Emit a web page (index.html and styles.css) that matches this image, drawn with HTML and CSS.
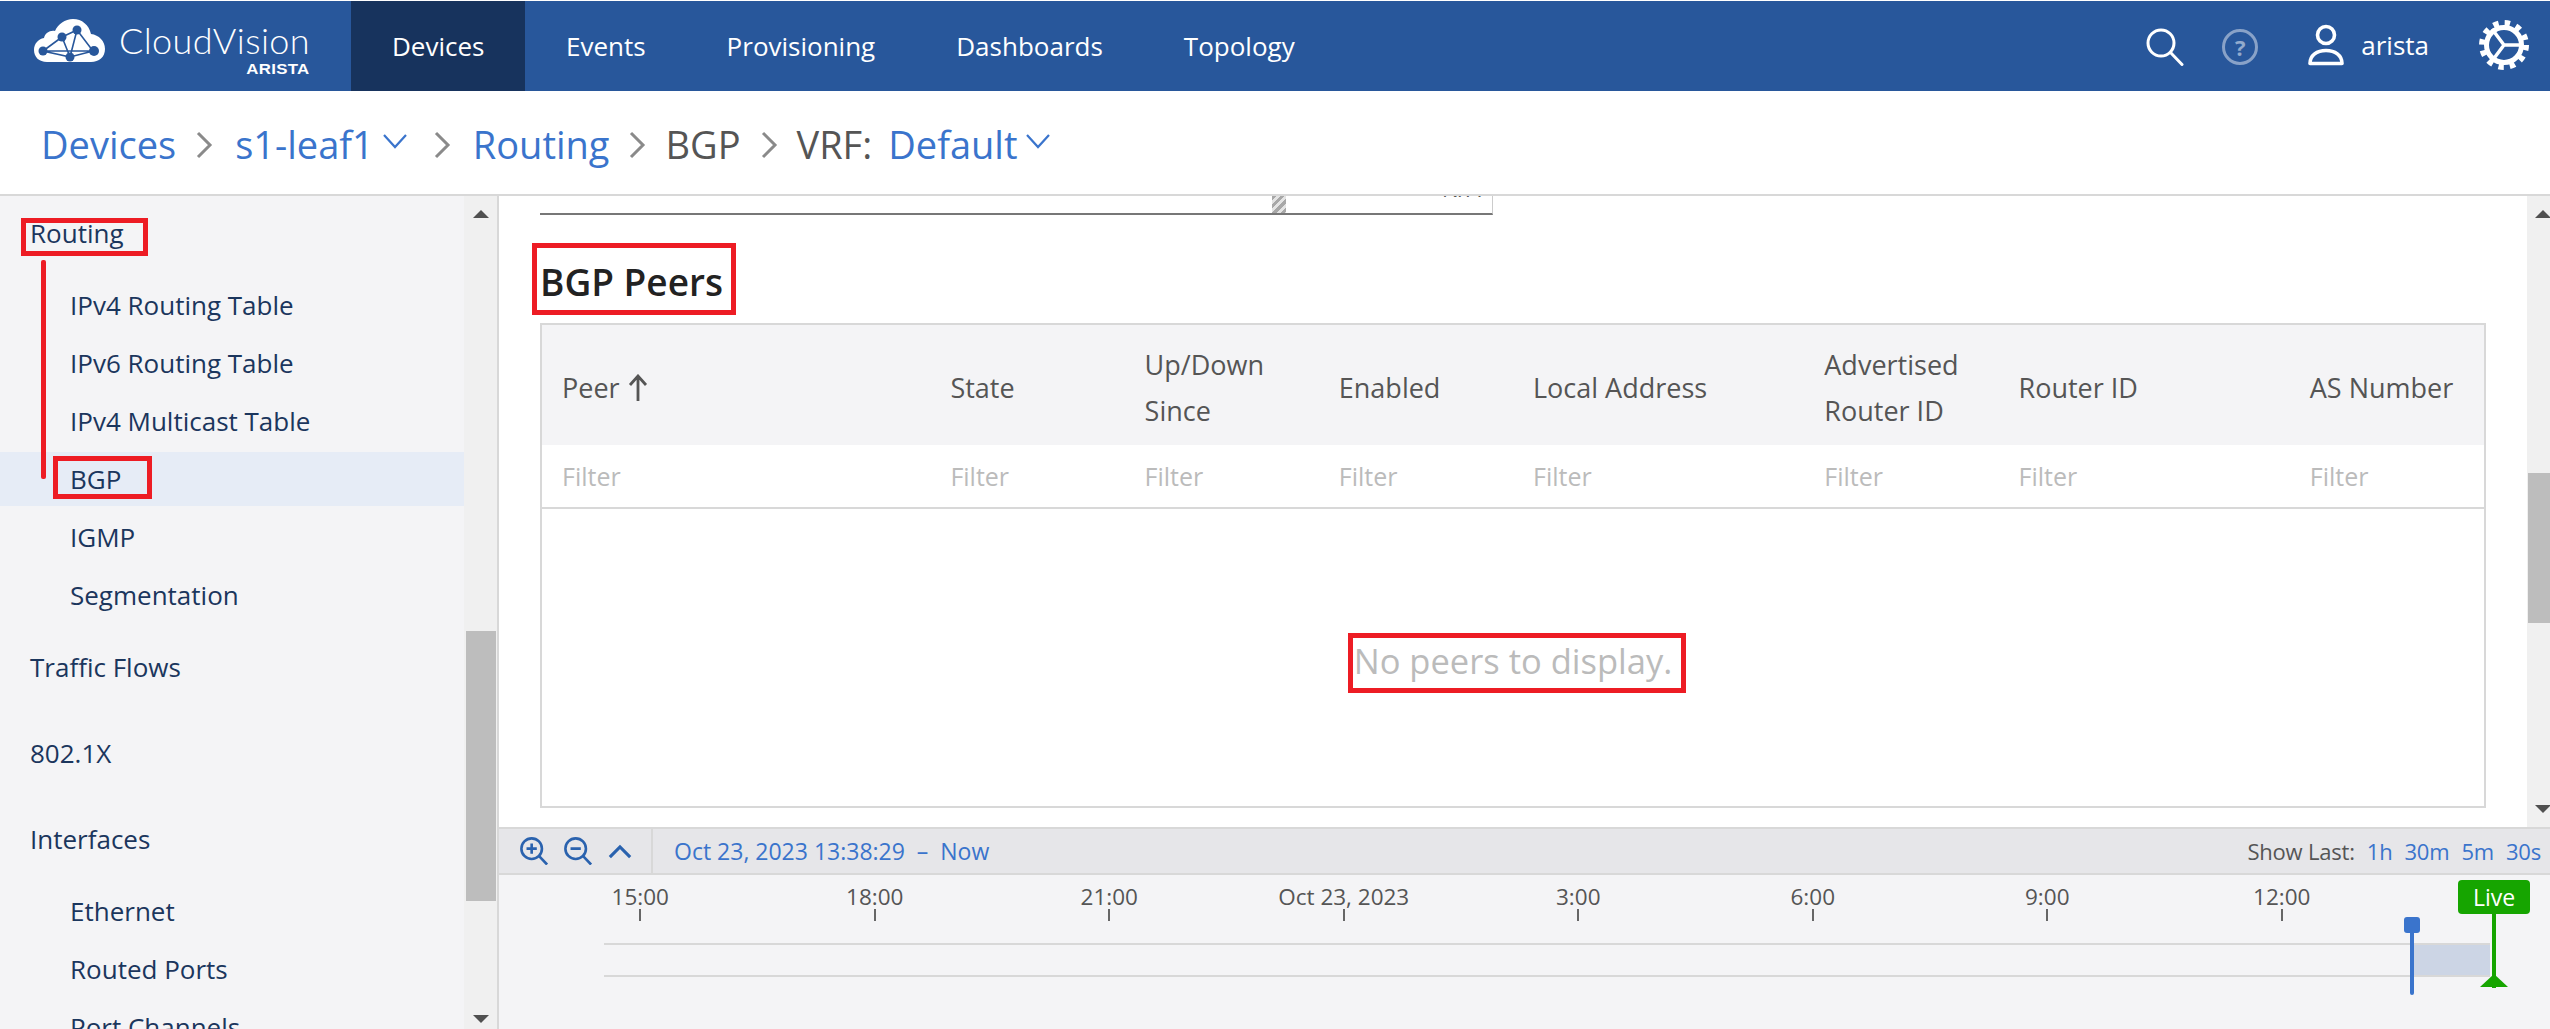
FILE: index.html
```html
<!DOCTYPE html>
<html lang="en">
<head>
    <meta charset="UTF-8">
    <title>CloudVision - BGP</title>
    <link rel="stylesheet" href="styles.css">
</head>
<body>
    <nav class="topnav">
        <div class="logo">
            <svg class="logo-cloud" width="72" height="44" viewBox="0 0 72 44">
                <path fill="#fff" d="M13 43C5 43 0 38 0 31c0-6 4-11 10-12 1-5 6-8 11-7C24 5 31 0 39 0c9 0 16 6 18 15 8 1 14 7 14 15 0 8-6 13-14 13z"/>
                <g stroke="#28579b" stroke-width="1.6" fill="none">
                    <path d="M9 32L28 18 43 11 59 32 36 38zM9 32L36 38 43 11M28 18L36 38M9 32L59 32"/>
                </g>
                <g fill="#28579b">
                    <circle cx="9" cy="32" r="4.5"/><circle cx="28" cy="18" r="4.5"/><circle cx="43" cy="11" r="4.5"/>
                    <circle cx="36" cy="38" r="4.5"/><circle cx="60" cy="32" r="5"/>
                </g>
            </svg>
            <div class="logo-words">
                <span class="logo-name">CloudVision</span>
                <span class="logo-brand">ARISTA</span>
            </div>
        </div>
        <a class="tab active">Devices</a>
        <a class="tab">Events</a>
        <a class="tab">Provisioning</a>
        <a class="tab">Dashboards</a>
        <a class="tab">Topology</a>
        <div class="nav-right">
            <svg class="icon-search" width="38" height="38" viewBox="0 0 38 38">
                <circle cx="15" cy="15" r="13" fill="none" stroke="#fff" stroke-width="3"/>
                <path d="M24.500 24.500L36 36.500" stroke="#fff" stroke-width="3" stroke-linecap="round"/>
            </svg>
            <div class="help">?</div>
            <svg class="icon-user" width="36" height="42" viewBox="0 0 36 42">
                <circle cx="18" cy="11" r="8.500" fill="none" stroke="#fff" stroke-width="3.600"/>
                <path d="M2 39.500C2 31 9 26.500 18 26.500S34 31 34 39.500z" fill="none" stroke="#fff" stroke-width="3.600" stroke-linejoin="round"/>
            </svg>
            <span class="username">arista</span>
            <svg class="icon-gear" width="50" height="50" viewBox="0 0 50 50">
                <circle cx="25" cy="25" r="17.500" fill="none" stroke="#fff" stroke-width="5"/>
                <circle cx="25" cy="25" r="21.500" fill="none" stroke="#fff" stroke-width="7" stroke-dasharray="5.260 6"/>
                <path d="M25 25H43M25 25L13 9M25 25L13 41" stroke="#fff" stroke-width="3.500" fill="none"/>
            </svg>
        </div>
    </nav>

    <header class="crumbs">
        <a class="crumb-link">Devices</a>
        <svg class="sep" width="17" height="28" viewBox="0 0 17 28"><path d="M2 2l12 12L2 26" fill="none" stroke="#8a8a8a" stroke-width="3"/></svg>
        <a class="crumb-link">s1-leaf1</a>
        <svg class="caret" width="26" height="16" viewBox="0 0 26 16"><path d="M2 2l11 12L24 2" fill="none" stroke="#3a74cc" stroke-width="2.200"/></svg>
        <svg class="sep" width="17" height="28" viewBox="0 0 17 28"><path d="M2 2l12 12L2 26" fill="none" stroke="#8a8a8a" stroke-width="3"/></svg>
        <a class="crumb-link">Routing</a>
        <svg class="sep sep-tight" width="17" height="28" viewBox="0 0 17 28"><path d="M2 2l12 12L2 26" fill="none" stroke="#8a8a8a" stroke-width="3"/></svg>
        <span class="crumb-text">BGP</span>
        <svg class="sep sep-tight" width="17" height="28" viewBox="0 0 17 28"><path d="M2 2l12 12L2 26" fill="none" stroke="#8a8a8a" stroke-width="3"/></svg>
        <span class="crumb-text">VRF:</span>
        <a class="crumb-link crumb-vrf">Default</a>
        <svg class="caret" width="26" height="16" viewBox="0 0 26 16"><path d="M2 2l11 12L24 2" fill="none" stroke="#3a74cc" stroke-width="2.200"/></svg>
    </header>

    <div class="workspace">
        <aside class="sidebar">
            <div class="side-list">
                <div class="side-head">Routing</div>
                <ul class="side-sub">
                    <li>IPv4 Routing Table</li>
                    <li>IPv6 Routing Table</li>
                    <li>IPv4 Multicast Table</li>
                    <li class="current">BGP</li>
                    <li>IGMP</li>
                    <li>Segmentation</li>
                </ul>
                <div class="side-head">Traffic Flows</div>
                <div class="side-head">802.1X</div>
                <div class="side-head">Interfaces</div>
                <ul class="side-sub">
                    <li>Ethernet</li>
                    <li>Routed Ports</li>
                    <li>Port Channels</li>
                </ul>
            </div>
            <div class="scrollbar side-scroll">
                <div class="arrow-up"></div>
                <div class="thumb"></div>
                <div class="arrow-down"></div>
            </div>
        </aside>

        <div class="main">
            <div class="content-wrap">
                <section class="content">
                    <div class="prev-table">
                        <div class="hatch"></div>
                        <span class="prev-value">N/A</span>
                    </div>
                    <h2 class="section-title">BGP Peers</h2>
                    <div class="peers">
                        <div class="peers-row peers-head">
                            <div>Peer <svg class="sort" width="20" height="28" viewBox="0 0 20 28"><path d="M10 27V2M2 11l8-9 8 9" fill="none" stroke="#555" stroke-width="2.800"/></svg></div>
                            <div>State</div>
                            <div>Up/Down<br>Since</div>
                            <div>Enabled</div>
                            <div>Local Address</div>
                            <div>Advertised<br>Router ID</div>
                            <div>Router ID</div>
                            <div>AS Number</div>
                        </div>
                        <div class="peers-row peers-filter">
                            <div>Filter</div><div>Filter</div><div>Filter</div><div>Filter</div>
                            <div>Filter</div><div>Filter</div><div>Filter</div><div>Filter</div>
                        </div>
                        <div class="peers-empty">No peers to display.</div>
                    </div>
                </section>
                <div class="scrollbar content-scroll">
                    <div class="arrow-up"></div>
                    <div class="thumb"></div>
                    <div class="arrow-down"></div>
                </div>
            </div>

            <div class="timeline">
                <div class="time-bar">
                    <div class="zoom-tools">
                        <svg width="28" height="28" viewBox="0 0 30 30"><circle cx="12.500" cy="12.500" r="11" fill="none" stroke="#2a62ae" stroke-width="2.800"/><path d="M20.500 20.500L29 29.500M7 12.500h11M12.500 7v11" fill="none" stroke="#2a62ae" stroke-width="2.800"/></svg>
                        <svg width="28" height="28" viewBox="0 0 30 30"><circle cx="12.500" cy="12.500" r="11" fill="none" stroke="#2a62ae" stroke-width="2.800"/><path d="M20.500 20.500L29 29.500M7 12.500h11" fill="none" stroke="#2a62ae" stroke-width="2.800"/></svg>
                        <svg width="24" height="15" viewBox="0 0 26 16"><path d="M2 14L13 3l11 11" fill="none" stroke="#2a62ae" stroke-width="3.400"/></svg>
                    </div>
                    <span class="range">Oct 23, 2023 13:38:29&nbsp; –&nbsp; Now</span>
                    <div class="show-last">
                        <span class="show-label">Show Last:</span>
                        <a>1h</a><a>30m</a><a>5m</a><a>30s</a>
                    </div>
                </div>
                <div class="chart">
                    <div class="ticks">
                        <div class="tick">15:00</div>
                        <div class="tick">18:00</div>
                        <div class="tick">21:00</div>
                        <div class="tick">Oct 23, 2023</div>
                        <div class="tick">3:00</div>
                        <div class="tick">6:00</div>
                        <div class="tick">9:00</div>
                        <div class="tick">12:00</div>
                    </div>
                    <div class="track"><div class="selection"></div></div>
                    <div class="handle"></div>
                    <div class="live">
                        <span class="live-badge">Live</span>
                        <span class="live-stem"></span>
                        <span class="live-foot"></span>
                    </div>
                </div>
            </div>
        </div>
    </div>

    <!-- red annotations drawn over the screenshot -->
    <div class="mark mark-routing"></div>
    <div class="mark-line"></div>
    <div class="mark mark-bgp"></div>
    <div class="mark mark-title"></div>
    <div class="mark mark-empty"></div>
</body>
</html>
```

FILE: styles.css
```css
* { box-sizing: border-box; }
html, body { margin: 0; padding: 0; }
body {
    width: 2550px;
    height: 1029px;
    padding-top: 1px;
    overflow: hidden;
    display: flex;
    flex-direction: column;
    position: relative;
    background: #fff;
    font-family: "Open Sans", "Noto Sans", sans-serif;
    font-size: 26px;
    color: #555;
}

/* top nav */
.topnav { display: flex; height: 90px; flex: none; background: #28579b; color: #fff; }
.logo { width: 351px; display: flex; padding: 18px 0 0 34px; flex: none; }
.logo-words { display: flex; flex-direction: column; align-items: flex-end; width: 190px; margin-left: 14px; }
.logo-name { font-family: Lato, sans-serif; font-weight: 300; font-size: 36px; line-height: 38px; letter-spacing: 0.4px; white-space: nowrap; margin-top: 2px; }
.logo-brand { font-family: "Liberation Sans", sans-serif; font-weight: 700; font-size: 15px; line-height: 14px; letter-spacing: 0.3px; margin-top: 3px; transform: scaleX(1.12); transform-origin: right; }
.tab { display: flex; align-items: center; padding: 0 40.500px; }
.tab.active { background: #17335d; padding: 0 41px; }
.nav-right { margin-left: auto; display: flex; align-items: center; padding-right: 21px; }
.icon-search { margin-right: 38px; margin-top: 1px; }
.help {
    width: 36px; height: 36px; margin-right: 50px; margin-top: 2px;
    border: 3px solid rgba(255, 255, 255, 0.45); border-radius: 50%;
    color: rgba(255, 255, 255, 0.5);
    display: flex; align-items: center; justify-content: center;
    font-size: 22px; font-weight: 700;
}
.icon-user { margin-right: 17px; margin-top: -3px; }
.username { margin-right: 50px; margin-top: -3px; }
.icon-gear { margin-top: -3px; }

/* breadcrumb */
.crumbs { height: 105px; flex: none; display: flex; align-items: center; padding: 2px 0 0 41px; border-bottom: 2px solid #d8d8d8; font-size: 38px; }
.crumb-link { color: #3a74cc; }
.crumb-text { color: #555; }
.sep { margin: 2px 22px 0 20px; flex: none; }
.sep-tight { margin-right: 19px; }
.caret { margin: -6px 0 0 8px; flex: none; }
.caret + .sep { margin-left: 26px; }
.crumb-vrf { margin-left: 16px; }

/* sidebar */
.workspace { flex: 1; display: flex; min-height: 0; }
.sidebar { width: 499px; flex: none; display: flex; border-right: 2px solid #d8d8d8; background: #f4f4f6; overflow: hidden; }
.side-list { width: 464px; padding-top: 10px; color: #1b365d; flex: none; }
.side-head { height: 54px; display: flex; align-items: center; padding-left: 30px; margin-bottom: 32px; }
.side-head:has(+ .side-sub) { margin-bottom: 18px; }
.side-sub { list-style: none; margin: 0 0 18px; padding: 0; display: flex; flex-direction: column; gap: 4px; }
.side-sub li { height: 54px; display: flex; align-items: center; padding-left: 70px; }
.side-sub li.current { background: #e6ecf6; }

/* scrollbars */
.scrollbar { background: #f0f0f0; padding-top: 14px; flex: none; }
.arrow-up, .arrow-down { width: 0; height: 0; border-left: 8px solid transparent; border-right: 8px solid transparent; }
.arrow-up { border-bottom: 8px solid #505050; }
.arrow-down { border-top: 8px solid #505050; }
.thumb { background: #bdbdbd; }
.side-scroll { width: 33px; }
.side-scroll .arrow-up, .side-scroll .arrow-down { margin-left: 9px; }
.side-scroll .thumb { width: 30px; height: 270px; margin: 413px 0 114px 2px; }
.content-scroll { width: 23px; }
.content-scroll .arrow-up, .content-scroll .arrow-down { margin-left: 8px; }
.content-scroll .thumb { width: 22px; height: 150px; margin: 255px 0 182px 1px; }

/* main content */
.main { flex: 1; min-width: 0; display: flex; flex-direction: column; }
.content-wrap { height: 631px; flex: none; display: flex; overflow: hidden; }
.content { flex: 1; min-width: 0; padding-left: 41px; }
.prev-table { width: 953px; height: 19px; display: flex; border-bottom: 2px solid #777; border-right: 1px solid #ccc; overflow: hidden; }
.hatch { width: 14px; margin-left: 732px; background: repeating-linear-gradient(135deg, #a8a8a8 0 3px, #e4e4e4 3px 6px); }
.prev-value { margin: -23px 0 0 156px; font-size: 22px; line-height: 30px; color: #555; }
.section-title { margin: 43px 0 17px; font-size: 37px; line-height: 48px; font-weight: 600; color: #222; }
.peers { width: 1946px; height: 485px; border: 2px solid #d8d8d8; display: flex; flex-direction: column; }
.peers-row { display: grid; grid-template-columns: 4fr 2fr 2fr 2fr 3fr 2fr 3fr 2fr; flex: none; }
.peers-row > div { padding-left: 20px; display: flex; align-items: center; }
.peers-head { height: 120px; padding-top: 5px; background: #f4f4f6; line-height: 46px; font-size: 27px; font-weight: 500; color: #555; }
.peers-head > div { display: block; align-self: center; }
.sort { vertical-align: -4px; margin-left: 1px; }
.peers-filter { height: 64px; border-bottom: 2px solid #d8d8d8; font-size: 25px; color: #bbb; }
.peers-empty { flex: 1; display: flex; align-items: center; justify-content: center; padding-top: 5px; font-size: 34.500px; color: #bbb; }

/* timeline */
.timeline { flex: 1; min-height: 0; background: #f4f4f6; }
.time-bar { height: 48px; display: flex; align-items: center; background: #e6e6e9; border-top: 2px solid #d8d8d8; border-bottom: 2px solid #d8d8d8; font-size: 22px; }
.zoom-tools { width: 154px; height: 100%; flex: none; display: flex; align-items: center; gap: 16px; padding-left: 21px; border-right: 2px solid #d8d8d8; }
.range { margin-left: 21px; font-size: 23px; color: #3a74cc; }
.show-last { margin-left: auto; padding-right: 9px; display: flex; gap: 12px; letter-spacing: -0.2px; color: #3a74cc; }
.show-label { color: #555; }
.chart { position: relative; height: 154px; padding-top: 10px; }
.ticks { display: grid; grid-template-columns: repeat(8, 234.500px); margin-left: 24px; }
.tick { text-align: center; font-size: 22.500px; line-height: 24px; }
.tick::after { content: ""; display: block; width: 2px; height: 12px; margin: 0 auto; background: #666; }
.track { position: relative; width: 1886px; height: 34px; margin: 22px 0 0 105px; border-top: 2px solid #d8d8d8; border-bottom: 2px solid #d8d8d8; }
.selection { position: absolute; top: 0; bottom: 0; right: 0; width: 77px; background: #ccd5e5; }
.handle { position: absolute; left: 1911px; top: 42px; width: 4px; height: 78px; background: #3a74cc; border-radius: 2px; }
.handle::before { content: ""; position: absolute; left: -6px; top: 0; width: 16px; height: 16px; background: #3a74cc; border-radius: 3px; }
.live { position: absolute; left: 1959px; top: 5px; width: 72px; display: flex; flex-direction: column; align-items: center; }
.live-badge { width: 72px; height: 34px; display: flex; align-items: center; justify-content: center; background: #16a500; border-radius: 4px; color: #fff; font-size: 23px; }
.live-stem { width: 4px; height: 74px; background: #16a500; }
.live-foot { width: 0; height: 0; margin-top: -14px; border-left: 14px solid transparent; border-right: 14px solid transparent; border-bottom: 13px solid #16a500; }

/* annotations */
.mark { position: absolute; border: 5px solid #ed1c24; }
.mark-routing { left: 21px; top: 218px; width: 127px; height: 38px; }
.mark-bgp { left: 53px; top: 456px; width: 99px; height: 43px; }
.mark-title { left: 532px; top: 243px; width: 204px; height: 72px; }
.mark-empty { left: 1348px; top: 633px; width: 338px; height: 60px; }
.mark-line { position: absolute; left: 41px; top: 260px; width: 5px; height: 219px; background: #ed1c24; border-radius: 2px; }
```
